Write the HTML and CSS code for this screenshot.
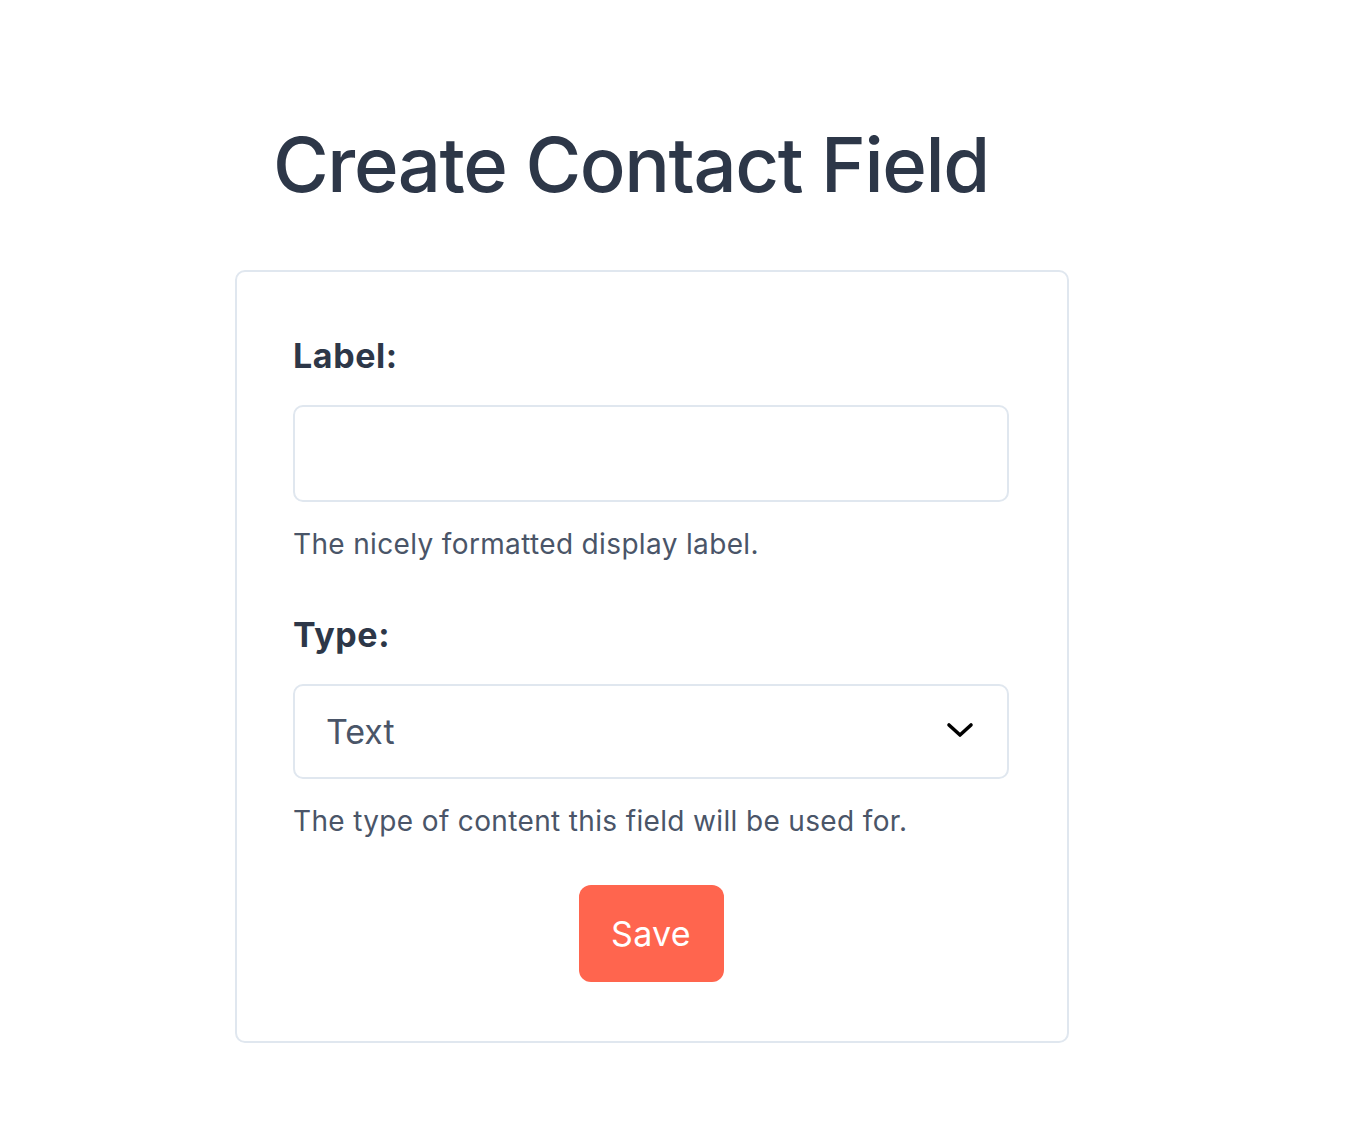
FILE: index.html
```html
<!DOCTYPE html>
<html lang="en">
<head>
<meta charset="utf-8">
<title>Create Contact Field</title>
<link rel="stylesheet" href="styles.css">
</head>
<body>
<main class="page">
  <h1 class="page-title">Create Contact Field</h1>
  <form class="card">
    <div class="field">
      <label class="field-label" for="label">Label:</label>
      <input class="field-input" id="label" type="text">
      <p class="field-help">The nicely formatted display label.</p>
    </div>
    <div class="field">
      <label class="field-label" for="type">Type:</label>
      <div class="select-wrap">
        <select class="field-select" id="type">
          <option>Text</option>
        </select>
        <svg class="select-chevron" viewBox="0 0 28 18" width="28" height="18" aria-hidden="true">
          <path d="M3 4 L14 14 L25 4" fill="none" stroke="#000" stroke-width="3.6" stroke-linecap="round" stroke-linejoin="round"/>
        </svg>
      </div>
      <p class="field-help">The type of content this field will be used for.</p>
    </div>
    <div class="actions">
      <button class="btn-save" type="submit">Save</button>
    </div>
  </form>
</main>
</body>
</html>
```

FILE: styles.css
```css
* { box-sizing: border-box; }

html, body {
  margin: 0;
  background: #ffffff;
}

body {
  font-family: Inter, "Noto Sans", "Liberation Sans", sans-serif;
  color: #2d3748;
}

.page {
  width: 834px;
  margin: 0 0 0 235px;
  padding-top: 118px;
}

.page-title {
  margin: 0 0 60px 38px;
  font-size: 76px;
  font-weight: 500;
  line-height: 92px;
  letter-spacing: -1.4px;
  color: #2d3748;
}

.card {
  border: 2px solid #e0e7ef;
  border-radius: 10px;
  padding: 62px 58px 59px 56px;
}

.field {
  display: flex;
  flex-direction: column;
}

.field + .field { margin-top: 50px; }

.field-label {
  font-size: 34px;
  font-weight: 700;
  line-height: 44px;
  letter-spacing: 0.6px;
  margin-bottom: 27px;
  color: #2d3748;
}

.field-input,
.field-select {
  width: 100%;
  height: 97px;
  border: 2px solid #e0e7ef;
  border-radius: 10px;
  background: #fff;
  font-family: inherit;
  font-size: 34px;
  color: #4a5568;
  padding: 0 32px;
  outline: none;
}

.select-wrap {
  position: relative;
}

.field-select {
  height: 95px;
  padding-left: 31px;
  appearance: none;
  -webkit-appearance: none;
}

.select-chevron {
  position: absolute;
  right: 35px;
  top: 37px;
  pointer-events: none;
}

.field-help {
  margin: 23px 0 0;
  font-size: 28px;
  line-height: 38px;
  letter-spacing: 0.35px;
  color: #4a5568;
}

.actions {
  display: flex;
  justify-content: center;
  margin-top: 45px;
}

.btn-save {
  width: 145px;
  height: 97px;
  border: 0;
  border-radius: 12px;
  background: #ff654e;
  color: #fff;
  font-family: inherit;
  font-size: 34px;
  font-weight: 400;
  letter-spacing: 0.3px;
}
```
